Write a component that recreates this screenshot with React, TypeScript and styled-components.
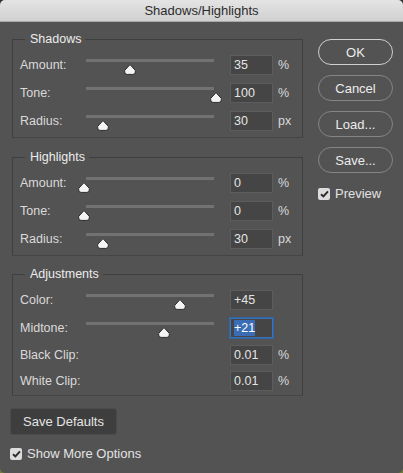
import React from 'react';
import styled, { createGlobalStyle } from 'styled-components';

const GlobalStyle = createGlobalStyle`
  html, body {
    margin: 0;
    padding: 0;
    background: linear-gradient(#2e2e2e 0 50%, #6d7a3c 50% 100%);
  }
  body {
    font-family: "Liberation Sans", Arial, sans-serif;
    -webkit-font-smoothing: antialiased;
  }
`;

const Window = styled.div`
  width: 403px;
  height: 473px;
  background: #535353;
  border-radius: 5px;
  overflow: hidden;
  display: flex;
  flex-direction: column;
`;

const TitleBar = styled.div`
  height: 21px;
  flex-shrink: 0;
  background: linear-gradient(#e4e4e4, #d0d0d0);
  border-bottom: 1px solid #a9a9a9;
  display: flex;
  align-items: center;
  justify-content: center;
  font-size: 13px;
  color: #2c2c2c;
`;

const Body = styled.div`
  display: flex;
  flex: 1;
  padding: 0 0 0 12px;
`;

const LeftColumn = styled.div`
  width: 291px;
  display: flex;
  flex-direction: column;
  padding-top: 10px;
`;

const Group = styled.fieldset`
  margin: 0;
  padding: 4px 0 2px 7px;
  border: 1px solid #3f3f3f;
  border-bottom-color: #454545;
  border-radius: 1px;
  min-width: 0;

  & + & {
    margin-top: 11.5px;
  }
`;

const Legend = styled.legend`
  margin-left: 5px;
  padding: 0 4px 0 5px;
  font-size: 12.5px;
  line-height: 15px;
  color: #ececec;
`;

const Row = styled.div<{ $h: number }>`
  height: ${p => p.$h}px;
  display: flex;
  align-items: center;
`;

const Label = styled.div`
  width: 66px;
  flex-shrink: 0;
  font-size: 12.5px;
  color: #dadada;
  white-space: nowrap;
`;

const SliderWrap = styled.div`
  position: relative;
  width: 128px;
  height: 100%;
  flex-shrink: 0;
  margin-right: 16px;
`;

const Track = styled.div`
  position: absolute;
  left: 0;
  right: 0;
  top: 8px;
  height: 3px;
  background: #727272;
`;

const Thumb = styled.svg`
  position: absolute;
  top: 13px;
  width: 12px;
  height: 11px;
`;

const Spacer = styled.div`
  width: 144px;
  flex-shrink: 0;
`;

const Field = styled.div<{ $focus?: boolean }>`
  box-sizing: border-box;
  width: 43px;
  height: 20px;
  background: #454545;
  border: 1px solid ${p => (p.$focus ? '#3d72b8' : '#5d5d5d')};
  box-shadow: ${p => (p.$focus ? '0 0 0 1px #2f62a6' : 'none')};
  padding: 0 3px;
  display: flex;
  align-items: center;
  font-size: 12.5px;
  color: #e4e4e4;
`;

const Selected = styled.span`
  background: #3b6db4;
  color: #ffffff;
  line-height: 16px;
`;

const Unit = styled.div`
  margin-left: 5px;
  font-size: 12.5px;
  color: #dadada;
`;

const RightColumn = styled.div`
  display: flex;
  flex-direction: column;
  align-items: flex-start;
  margin-left: 15px;
  padding-top: 17px;
`;

const PillButton = styled.button<{ $primary?: boolean }>`
  width: 75px;
  height: 26px;
  border-radius: 13px;
  background: #535353;
  border: 1px solid ${p => (p.$primary ? '#cfcfcf' : '#858585')};
  color: #ececec;
  font-family: inherit;
  font-size: 13px;
  padding: 0;
  margin-bottom: 10px;
`;

const CheckRow = styled.div<{ $offset?: number }>`
  display: flex;
  align-items: center;
  gap: 5px;
  margin-top: ${p => p.$offset ?? 0}px;
  font-size: 13px;
  color: #e2e2e2;
`;

const Box = styled.div`
  width: 12px;
  height: 12px;
  border-radius: 2px;
  background: #dcdcdc;
  display: flex;
  align-items: center;
  justify-content: center;
`;

const Footer = styled.div`
  display: flex;
  flex-direction: column;
  align-items: flex-start;
  padding: 0 0 0 10px;
  gap: 11px;
  margin-bottom: 12px;
`;

const DefaultsButton = styled.button`
  width: 107px;
  height: 27px;
  border-radius: 3px;
  background: #3e3e3e;
  border: 1px solid #4b4b4b;
  color: #e4e4e4;
  font-family: inherit;
  font-size: 13px;
  padding: 0;
`;

const Check = () => (
  <Box>
    <svg width="9" height="8" viewBox="0 0 9 8">
      <path d="M1 4.2 L3.4 6.5 L8 1.3" fill="none" stroke="#2a2a2a" strokeWidth="1.9" />
    </svg>
  </Box>
);

type SliderRow = {
  label: string;
  value: string;
  unit?: string;
  pos?: number;
  focus?: boolean;
  h: number;
};

const Control = ({ label, value, unit, pos, focus, h }: SliderRow) => (
  <Row $h={h}>
    <Label>{label}</Label>
    {pos === undefined ? (
      <Spacer />
    ) : (
      <SliderWrap>
        <Track />
        <Thumb viewBox="0 0 12 11" style={{ left: pos * 132 - 8 }}>
          <path
            d="M6 0.6 L11.3 6.4 L11.3 8 Q11.3 10.4 8.9 10.4 L3.1 10.4 Q0.7 10.4 0.7 8 L0.7 6.4 Z"
            fill="#f4f4f4"
            stroke="#2c2c2c"
            strokeWidth="1"
          />
        </Thumb>
      </SliderWrap>
    )}
    <Field $focus={focus}>{focus ? <Selected>{value}</Selected> : value}</Field>
    {unit && <Unit>{unit}</Unit>}
  </Row>
);

const shadows: SliderRow[] = [
  { label: 'Amount:', value: '35', unit: '%', pos: 0.35, h: 28 },
  { label: 'Tone:', value: '100', unit: '%', pos: 1, h: 28 },
  { label: 'Radius:', value: '30', unit: 'px', pos: 0.144, h: 28 },
];

const highlights: SliderRow[] = [
  { label: 'Amount:', value: '0', unit: '%', pos: 0, h: 28 },
  { label: 'Tone:', value: '0', unit: '%', pos: 0, h: 28 },
  { label: 'Radius:', value: '30', unit: 'px', pos: 0.144, h: 28 },
];

const adjustments: SliderRow[] = [
  { label: 'Color:', value: '+45', pos: 0.725, h: 28 },
  { label: 'Midtone:', value: '+21', pos: 0.605, focus: true, h: 28 },
  { label: 'Black Clip:', value: '0.01', unit: '%', h: 26 },
  { label: 'White Clip:', value: '0.01', unit: '%', h: 25 },
];

const App: React.FC = () => {
  return (
    <>
      <GlobalStyle />
      <Window>
        <TitleBar>Shadows/Highlights</TitleBar>
        <Body>
          <LeftColumn>
            <Group>
              <Legend>Shadows</Legend>
              {shadows.map(r => <Control key={r.label} {...r} />)}
            </Group>
            <Group>
              <Legend>Highlights</Legend>
              {highlights.map(r => <Control key={r.label} {...r} />)}
            </Group>
            <Group>
              <Legend>Adjustments</Legend>
              {adjustments.map(r => <Control key={r.label} {...r} />)}
            </Group>
          </LeftColumn>
          <RightColumn>
            <PillButton $primary>OK</PillButton>
            <PillButton>Cancel</PillButton>
            <PillButton>Load...</PillButton>
            <PillButton>Save...</PillButton>
            <CheckRow $offset={3}>
              <Check />
              Preview
            </CheckRow>
          </RightColumn>
        </Body>
        <Footer>
          <DefaultsButton>Save Defaults</DefaultsButton>
          <CheckRow>
            <Check />
            Show More Options
          </CheckRow>
        </Footer>
      </Window>
    </>
  );
};

export default App;
